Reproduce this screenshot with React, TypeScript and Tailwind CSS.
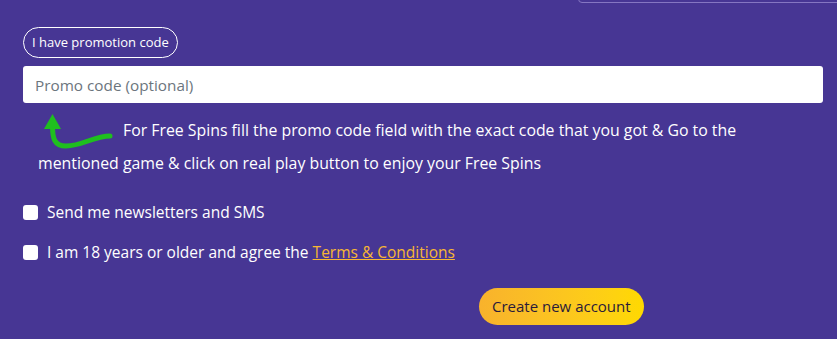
import React from 'react';

const font = { fontFamily: '"Open Sans", "Noto Sans", sans-serif' };

const CurvedArrow: React.FC = () => (
  <svg width="72" height="33" viewBox="0 0 72 33" className="inline-block align-top overflow-visible">
    <path d="M8.5 12 C 8.5 24, 10 32, 22 32 C 38 32, 50 22, 66 22" fill="none" stroke="#1fbf1f" strokeWidth="5" strokeLinecap="round" />
    <path d="M0 15 L8.5 0 L17 15 Z" fill="#1fbf1f" />
  </svg>
);

const App: React.FC = () => {
  return (
    <div className="w-[837px] h-[339px] bg-[#473694] text-white overflow-hidden relative" style={font}>
      <div className="absolute top-[-20px] left-[578px] w-[280px] h-[23px] border border-[#8576c2] rounded-bl-[4px]" />
      <div className="pt-[27px] pl-[23px] pr-[14px]">
        <button type="button" className="h-[31px] px-[8px] border border-white rounded-full text-[13px] leading-none text-white">
          I have promotion code
        </button>
        <input
          type="text"
          placeholder="Promo code (optional)"
          className="mt-[8px] block w-[800px] h-[37px] bg-white rounded-[3px] px-[12px] text-[15.3px] text-gray-700 placeholder:text-[#6c757d] outline-none"
        />
        <p className="mt-[11px] pl-[15px] pr-[40px] text-[15.85px] leading-[33px]">
          <span className="inline-block w-[85px] pl-[6px] h-[33px] align-top">
            <CurvedArrow />
          </span>
          For Free Spins fill the promo code field with the exact code that you got &amp; Go to the mentioned game &amp; click on real play button to enjoy your Free Spins
        </p>
        <div className="mt-[21px] flex flex-col gap-[17px] text-[15.5px]">
          <label className="flex items-center gap-[9px] h-[23px]">
            <input type="checkbox" className="appearance-none w-[15px] h-[15px] bg-white rounded-[3px]" />
            <span>Send me newsletters and SMS</span>
          </label>
          <label className="flex items-center gap-[9px] h-[23px]">
            <input type="checkbox" className="appearance-none w-[15px] h-[15px] bg-white rounded-[3px]" />
            <span>
              I am 18 years or older and agree the{' '}
              <a href="#" className="text-[#f7b733] underline">Terms &amp; Conditions</a>
            </span>
          </label>
        </div>
        <div className="mt-[24px] pl-[456px]">
          <button type="button" className="h-[37px] px-[13px] rounded-full bg-gradient-to-r from-[#f8b22c] to-[#ffd900] text-[#2a1a3a] text-[15px]">
            Create new account
          </button>
        </div>
      </div>
    </div>
  );
};

export default App;
